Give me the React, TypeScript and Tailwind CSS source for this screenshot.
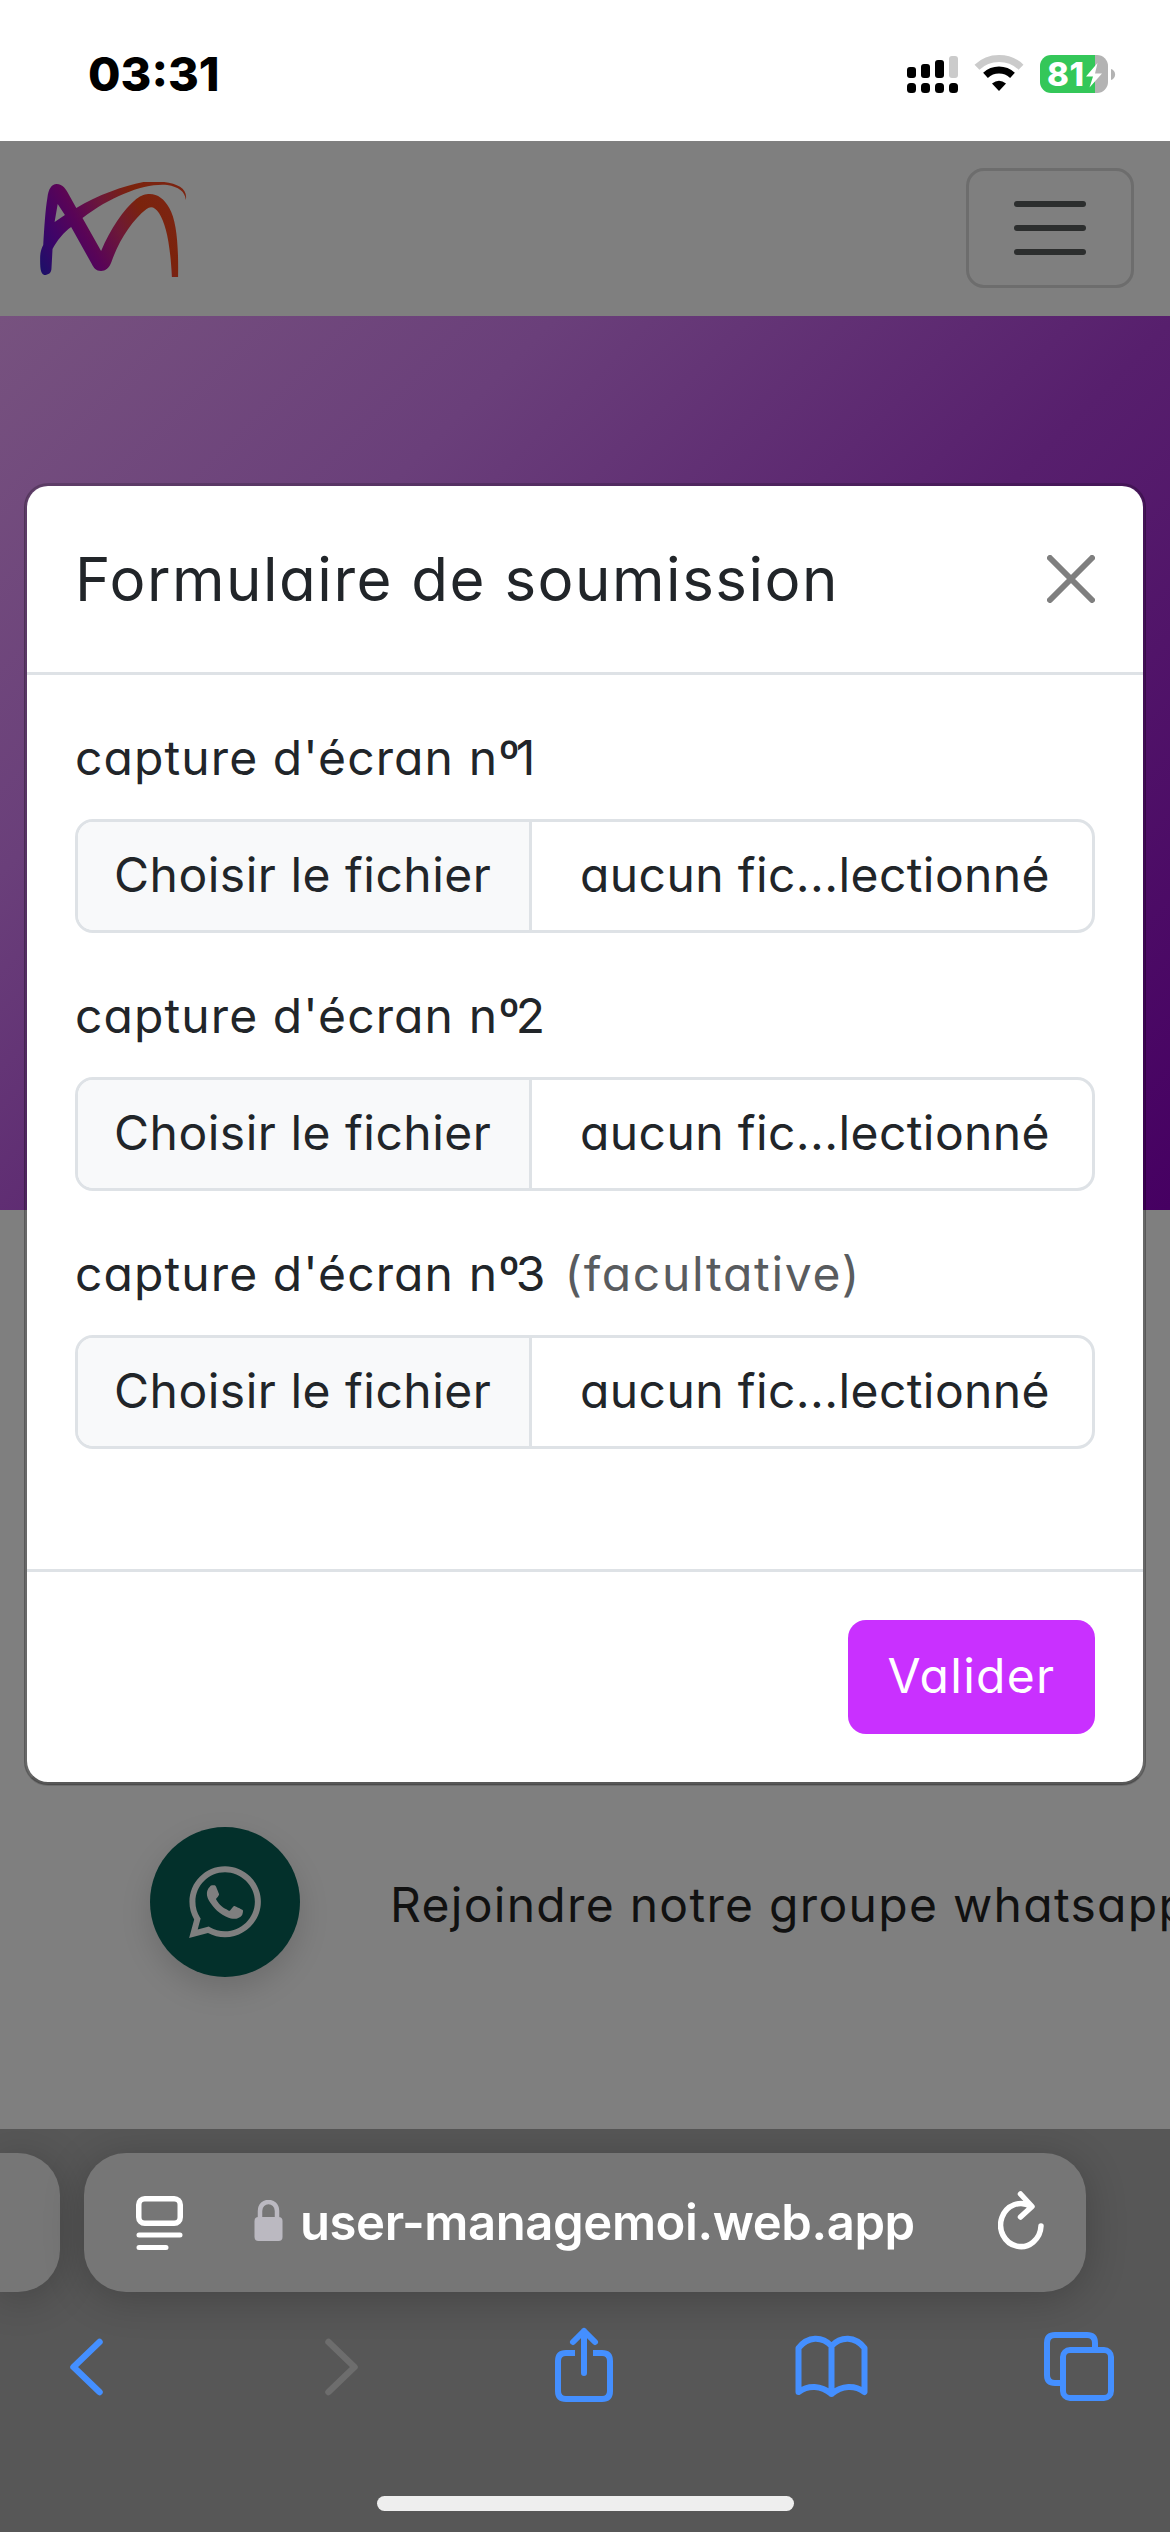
import React from "react";
import { FaWhatsapp } from "react-icons/fa";

type FieldProps = {
    index: number;
    hint?: string;
};

const fields: FieldProps[] = [
    { index: 1 },
    { index: 2 },
    { index: 3, hint: "(facultative)" },
];

const Logo = () => (
    <svg
        className="mt-[7px]"
        width="155"
        height="100"
        viewBox="0 0 150 100"
        preserveAspectRatio="none"
        fill="none"
    >
        <defs>
            <linearGradient
                id="logo"
                gradientUnits="userSpaceOnUse"
                x1="6"
                y1="90"
                x2="125"
                y2="25"
            >
                <stop offset="0" stopColor="#1d0f68" />
                <stop offset="0.2" stopColor="#3f0468" />
                <stop offset="0.4" stopColor="#590457" />
                <stop offset="0.62" stopColor="#6c1838" />
                <stop offset="0.85" stopColor="#7b230c" />
                <stop offset="1" stopColor="#7c2410" />
            </linearGradient>
        </defs>
        <path
            fill="url(#logo)"
            fillRule="evenodd"
            d="M4 76C4 71 5 67 7 63C8 46 9 28 11 16C12 7 15 2 20 2C26 2 29 7 32 13L39 26C60 13 84 4 104 0H124C138 2 147 7 145 18C144 9 138 5 127 3C105 1 73 14 45 36L63 69C72 47 85 27 97 17C102 13 106 12 110 12C118 12 124 17 129 26C136 39 138 61 137.500 95H131.500C130 63 126 42 119 31C115 25 111 24 107 27C93 38 80 59 73 80C71 86 67 89 63 89C58 89 56 86 54 82L34 45C27 50 20 59 16 67L15 86C15 91 12 93 8 93C4 92 4 84 4 76ZM21 22L18 40L28 33Z"
        />
    </svg>
);

const StatusIcons = () => (
    <svg width="216" height="44" viewBox="0 0 216 44">
        <g fill="#000">
            <rect x="1" y="14" width="9" height="11" rx="3" />
            <rect x="15" y="11" width="9" height="14" rx="3" />
            <rect x="29" y="7" width="9" height="18" rx="3" />
            <rect x="43" y="3" width="9" height="22" rx="3" fill="#cbcbcb" />
            <rect x="1" y="30" width="9" height="10" rx="3.500" />
            <rect x="15" y="30" width="9" height="10" rx="3.500" />
            <rect x="29" y="30" width="9" height="10" rx="3.500" />
            <rect x="43" y="30" width="9" height="10" rx="3.500" />
        </g>
        <path
            d="M71 14.200C83 2.500 103 2.500 115 14.200"
            fill="none"
            stroke="#cbcbcb"
            strokeWidth="7"
        />
        <path
            d="M79.500 22.300A20 20 0 0 1 106.500 22.300"
            fill="none"
            stroke="#000"
            strokeWidth="7"
        />
        <path d="M86 30.500Q93 24.800 100 30.500L93 38Z" fill="#000" />
        <clipPath id="battery">
            <rect x="134" y="2" width="68" height="38" rx="11" />
        </clipPath>
        <g clipPath="url(#battery)">
            <path d="M134 2H189V40H134Z" fill="#34c759" />
            <path d="M189 2H202V40H189Z" fill="#b3b3b3" />
        </g>
        <path d="M205 16C210.500 17.500 210.500 25.500 205 27Z" fill="#b3b3b3" />
        <text
            x="141"
            y="33"
            fill="#fff"
            textLength="37"
            className="font-['Inter'] text-[33px] font-extrabold"
        >
            81
        </text>
        <path d="M191.500 10L180 23.500H187L183.500 34.500L196 20.500H189Z" fill="#fff" />
    </svg>
);

const FileField = ({ index, hint }: FieldProps) => (
    <div className="mb-12">
        <label className="mb-6 flex h-[72px] items-center gap-[18px] whitespace-nowrap pb-[3px] text-[48px]">
            <span className="tracking-[1.1px]">
                capture d'écran n<span className="tracking-[-4px]">º</span>
                {index}
            </span>
            {hint && (
                <span className="tracking-[1.7px] text-[#595c5f]">{hint}</span>
            )}
        </label>
        <div className="flex h-[114px] overflow-hidden rounded-[18px] border-[3px] border-[#dee2e6] text-[48px]">
            <div className="flex w-[454px] shrink-0 items-center whitespace-nowrap border-r-[3px] border-[#dee2e6] bg-[#f8f9fa] pb-[3px] pl-9 tracking-[0.5px]">
                Choisir le fichier
            </div>
            <div className="flex items-center whitespace-nowrap pb-[3px] pl-12 tracking-[0.4px]">
                aucun fic...lectionné
            </div>
        </div>
    </div>
);

const SubmissionModal = () => (
    <div className="absolute left-[24px] top-[483px] w-[1122px] rounded-[24px] border-[3px] border-black/[0.175] border-b-black/30 bg-white bg-clip-padding shadow-[0_1px_0_rgba(0,0,0,0.15)]">
        <div className="flex h-[189px] items-center justify-between border-b-[3px] border-[#dee2e6] px-12">
            <h1 className="whitespace-nowrap text-[60px] tracking-[1.5px]">
                Formulaire de soumission
            </h1>
            <svg
                width="48"
                height="48"
                viewBox="0 0 48 48"
                stroke="#7f7f7f"
                strokeWidth="6"
                strokeLinecap="round"
            >
                <path d="M3 3L45 45M45 3L3 45" />
            </svg>
        </div>
        <div className="h-[894px] p-12">
            {fields.map((field) => (
                <FileField key={field.index} {...field} />
            ))}
        </div>
        <div className="flex h-[213px] items-center justify-end border-t-[3px] border-[#dee2e6] px-12">
            <button className="h-[114px] w-[247px] rounded-[18px] bg-[#c930ff] pb-[3px] text-[48px] tracking-[1.3px] text-white">
                Valider
            </button>
        </div>
    </div>
);

const BrowserBar = () => (
    <div className="relative h-[403px] shrink-0 overflow-hidden bg-[#575757]">
        <div className="flex gap-6 pt-6">
            <div className="h-[139px] w-[60px] shrink-0 rounded-r-[42px] bg-[#767676] shadow-[0_6px_40px_rgba(0,0,0,0.22)]" />
            <div className="flex h-[139px] w-[1002px] shrink-0 items-center rounded-[42px] bg-[#767676] pl-[52px] shadow-[0_6px_40px_rgba(0,0,0,0.22)]">
                <svg
                    width="48"
                    height="56"
                    viewBox="0 0 48 56"
                    fill="none"
                    stroke="#fff"
                    strokeWidth="5.500"
                >
                    <rect x="2.750" y="3.750" width="41.500" height="24.500" rx="6" />
                    <path
                        d="M3 40H44M3 52.500H30"
                        strokeWidth="5"
                        strokeLinecap="round"
                    />
                </svg>
                <svg
                    className="mb-[4px] ml-[70px]"
                    width="30"
                    height="42"
                    viewBox="0 0 30 42"
                >
                    <path
                        d="M6 20V11C6 -1 23 -1 23 11V20"
                        fill="none"
                        stroke="#bbb9c1"
                        strokeWidth="4.500"
                    />
                    <rect x="0.500" y="17" width="28" height="24" rx="4" fill="#bbb9c1" />
                </svg>
                <span className="ml-[16px] w-[622px] whitespace-nowrap text-[49px] font-semibold tracking-[-0.4px] text-white [font-feature-settings:normal]">
                    user-managemoi.web.app
                </span>
                <svg
                    className="mb-[6px] ml-[76px]"
                    width="48"
                    height="60"
                    viewBox="0 0 48 60"
                    fill="none"
                    stroke="#fff"
                    strokeWidth="5.500"
                    strokeLinecap="round"
                    strokeLinejoin="round"
                >
                    <path d="M43 36A20.200 21.500 0 1 1 33 16.500M22.500 4L34 16.500L22.500 27" />
                </svg>
            </div>
        </div>
        <svg
            className="block"
            width="1170"
            height="110"
            viewBox="0 2289 1170 110"
            fill="none"
            stroke="#448fff"
            strokeWidth="6"
            strokeLinecap="round"
            strokeLinejoin="round"
        >
            <path d="M99.500 2339L73.500 2364L99.500 2389" strokeWidth="6.500" />
            <path
                d="M328.500 2339L354.500 2364L328.500 2389"
                stroke="#6d6d6d"
                strokeWidth="6.500"
            />
            <path
                d="M575 2350H566Q558 2350 558 2358V2388Q558 2396 566 2396H602Q610 2396 610 2388V2358Q610 2350 602 2350H593"
                strokeLinecap="butt"
            />
            <path d="M584 2370V2328M573 2339L584 2328L595 2339" />
            <path d="M831.500 2343C822 2333 808 2333 798.500 2345V2389C808 2382 821 2382 831.500 2391C842 2382 855 2382 864.500 2389V2345C855 2333 841 2333 831.500 2343V2391" />
            {/* open tabs */}
            <rect x="1063" y="2347" width="48" height="48" rx="7" />
            <path
                d="M1063 2380H1055Q1047 2380 1047 2372V2340Q1047 2332 1055 2332H1087Q1095 2332 1095 2340V2346"
                strokeLinecap="butt"
            />
        </svg>
        <div className="absolute bottom-[21px] left-[377px] h-[15px] w-[417px] rounded-full bg-[#eee]" />
    </div>
);

const App = () => {
    return (
        <div className="relative flex h-[2532px] w-[1170px] flex-col overflow-hidden bg-[#7f7f7f] font-['Inter',sans-serif] text-[#212529] [font-feature-settings:'cv11']">
            <div className="flex h-[141px] shrink-0 items-center justify-between bg-white pl-[88px] pr-[48px] pt-2 text-black">
                <span className="text-[47px] font-extrabold">03:31</span>
                <StatusIcons />
            </div>
            <nav className="flex h-[175px] shrink-0 items-center justify-between px-9 pb-px">
                <Logo />
                <div className="flex h-[120px] w-[168px] flex-col items-center justify-center gap-[18px] rounded-[18px] border-[3px] border-[#6d6d6d]">
                    <span className="h-[6px] w-[72px] rounded-full bg-[#2c2e2e]" />
                    <span className="h-[6px] w-[72px] rounded-full bg-[#2c2e2e]" />
                    <span className="h-[6px] w-[72px] rounded-full bg-[#2c2e2e]" />
                </div>
            </nav>
            <div className="h-[894px] shrink-0 bg-[linear-gradient(135deg,#77527f,#6a3f7a_27%,#571f6d_57%,#460062)]" />
            <div className="flex-1 px-[150px] pt-[617px]">
                <div className="flex items-center gap-[90px]">
                    <div className="flex size-[150px] shrink-0 items-center justify-center rounded-full bg-[#03302b] shadow-[0_12px_30px_rgba(0,0,0,0.15)]">
                        <FaWhatsapp className="size-[82px] text-[#7f7f7f]" />
                    </div>
                    <span className="whitespace-nowrap pt-1.5 text-[48px] tracking-[1.3px] text-[#111]">
                        Rejoindre notre groupe whatsapp
                    </span>
                </div>
            </div>
            <BrowserBar />
            <SubmissionModal />
        </div>
    );
};

export default App;
